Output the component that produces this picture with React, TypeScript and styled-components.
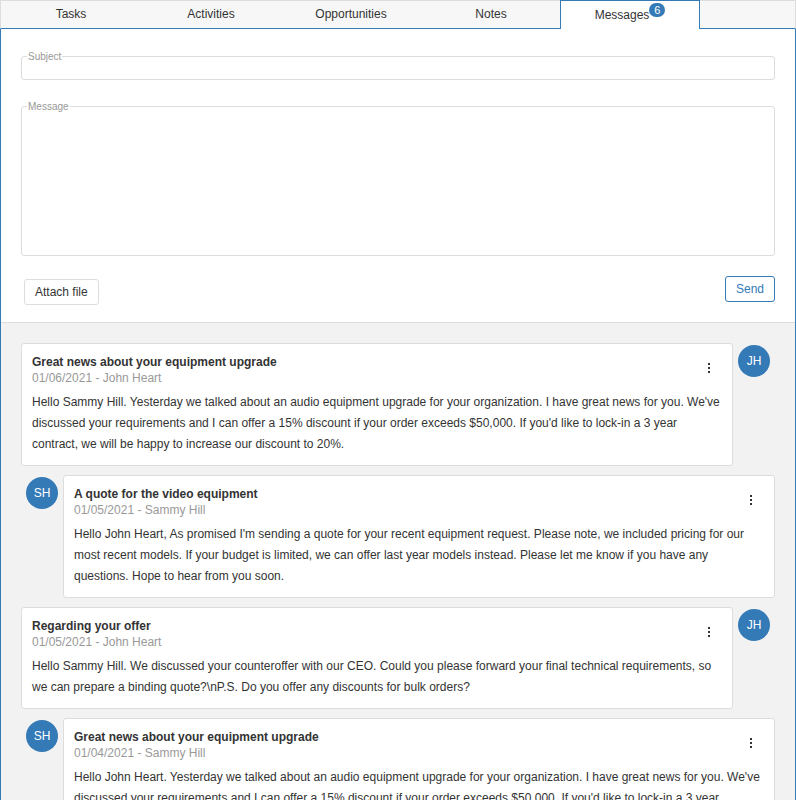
import React from "react";
import styled, { createGlobalStyle } from "styled-components";

const Global = createGlobalStyle`
  html, body { margin: 0; padding: 0; background: #fff; }
  body { font-family: "Liberation Sans", Arial, Helvetica, sans-serif; font-size: 12px; color: #333; }
  * { box-sizing: border-box; }
`;

const Page = styled.div`
  width: 796px;
`;

const TabBar = styled.div`
  display: flex;
  height: 29px;
  background: #f7f7f7;
  border: 1px solid #ddd;
  border-bottom: 1px solid #337ab7;
`;

const Tab = styled.div<{ $active?: boolean }>`
  width: 140px;
  flex: 0 0 140px;
  display: flex;
  align-items: center;
  justify-content: center;
  padding-bottom: 2px;
  font-size: 12px;
  color: #333;
  ${(p) =>
    p.$active
      ? `
    margin: -1px 0 -1px -1px;
    height: 29px;
    padding-bottom: 0;
    background: #fff;
    border: 1px solid #337ab7;
    border-bottom: none;
  `
      : ""}
`;

const Badge = styled.span`
  position: relative;
  top: -5px;
  display: inline-flex;
  align-items: center;
  justify-content: center;
  width: 16px;
  height: 14px;
  border-radius: 8px;
  background: #337ab7;
  color: #fff;
  font-size: 11px;
  line-height: 14px;
`;

const Panel = styled.div`
  border: 1px solid #337ab7;
  border-top: none;
`;

const Form = styled.div`
  display: flex;
  flex-direction: column;
  padding: 22px 20px 17px;
  border-bottom: 1px solid #ddd;
`;

const Field = styled.fieldset<{ $height: number }>`
  margin: 0 0 21px;
  padding: 0 6px;
  border: 1px solid #ddd;
  border-radius: 3px;
  min-width: 0;
  height: ${(p) => p.$height}px;
`;

const Legend = styled.legend`
  font-size: 10px;
  line-height: 11px;
  height: 11px;
  color: #999;
  padding: 0 1px;
  margin-left: -1px;
`;

const Input = styled.input`
  width: 100%;
  height: 16px;
  border: none;
  outline: none;
  background: transparent;
  font: inherit;
`;

const TextArea = styled.textarea`
  width: 100%;
  height: 138px;
  border: none;
  outline: none;
  resize: none;
  background: transparent;
  font: inherit;
`;

const Actions = styled.div`
  display: flex;
  justify-content: space-between;
  align-items: flex-start;
  margin-top: -1px;
`;

const Button = styled.button<{ $primary?: boolean }>`
  height: 26px;
  padding: 0 10px;
  border-radius: 3px;
  background: #fff;
  font-family: inherit;
  font-size: 12px;
  cursor: pointer;
  border: 1px solid ${(p) => (p.$primary ? "#337ab7" : "#ddd")};
  color: ${(p) => (p.$primary ? "#337ab7" : "#333")};
  margin-top: ${(p) => (p.$primary ? "0" : "3px")};
  margin-left: ${(p) => (p.$primary ? "0" : "3px")};
`;

const List = styled.div`
  background: #f2f2f2;
  padding: 20px 20px 20px;
  display: flex;
  flex-direction: column;
  gap: 9px;
`;

const Row = styled.div<{ $mine?: boolean }>`
  display: flex;
  flex-direction: ${(p) => (p.$mine ? "row" : "row-reverse")};
  align-items: flex-start;
`;

const Avatar = styled.div`
  flex: 0 0 32px;
  width: 32px;
  height: 32px;
  margin: 2px 5px 0;
  border-radius: 50%;
  background: #337ab7;
  color: #fff;
  display: flex;
  align-items: center;
  justify-content: center;
  font-size: 12px;
`;

const Card = styled.div`
  flex: 1;
  min-width: 0;
  background: #fff;
  border: 1px solid #ddd;
  border-radius: 3px;
  padding: 10px;
`;

const CardHead = styled.div`
  display: flex;
  align-items: flex-start;
  justify-content: space-between;
`;

const Title = styled.div`
  font-weight: bold;
  font-size: 12px;
  line-height: 16px;
  color: #333;
`;

const Meta = styled.div`
  font-size: 12px;
  line-height: 16px;
  color: #999;
`;

const MenuButton = styled.button`
  width: 24px;
  height: 24px;
  margin: 2px 1px 0 0;
  padding: 0;
  border: none;
  background: transparent;
  display: flex;
  align-items: center;
  justify-content: center;
  cursor: pointer;
`;

const Body = styled.div`
  margin-top: 6px;
  font-size: 12px;
  line-height: 21px;
  color: #333;
`;

const Dots = () => (
  <svg width="4" height="12" viewBox="0 0 4 12">
    <rect x="1" y="1" width="2" height="2" fill="#333" />
    <rect x="1" y="5" width="2" height="2" fill="#333" />
    <rect x="1" y="9" width="2" height="2" fill="#333" />
  </svg>
);

type Msg = { title: string; date: string; from: string; initials: string; mine: boolean; text: string };

const upgradeText = (to: string) =>
  `Hello ${to}. Yesterday we talked about an audio equipment upgrade for your organization. I have great news for you. We've discussed your requirements and I can offer a 15% discount if your order exceeds $50,000. If you'd like to lock-in a 3 year contract, we will be happy to increase our discount to 20%.`;

const messages: Msg[] = [
  { title: "Great news about your equipment upgrade", date: "01/06/2021", from: "John Heart", initials: "JH", mine: false, text: upgradeText("Sammy Hill") },
  {
    title: "A quote for the video equipment",
    date: "01/05/2021",
    from: "Sammy Hill",
    initials: "SH",
    mine: true,
    text: "Hello John Heart, As promised I'm sending a quote for your recent equipment request. Please note, we included pricing for our most recent models. If your budget is limited, we can offer last year models instead. Please let me know if you have any questions. Hope to hear from you soon.",
  },
  {
    title: "Regarding your offer",
    date: "01/05/2021",
    from: "John Heart",
    initials: "JH",
    mine: false,
    text: "Hello Sammy Hill. We discussed your counteroffer with our CEO. Could you please forward your final technical requirements, so we can prepare a binding quote?\\nP.S. Do you offer any discounts for bulk orders?",
  },
  { title: "Great news about your equipment upgrade", date: "01/04/2021", from: "Sammy Hill", initials: "SH", mine: true, text: upgradeText("John Heart") },
];

const tabs = ["Tasks", "Activities", "Opportunities", "Notes"];

export default function App() {
  return (
    <Page>
      <Global />
      <TabBar>
        {tabs.map((t) => (
          <Tab key={t}>{t}</Tab>
        ))}
        <Tab $active>
          Messages<Badge>6</Badge>
        </Tab>
      </TabBar>
      <Panel>
        <Form>
          <Field $height={29}>
            <Legend>Subject</Legend>
            <Input />
          </Field>
          <Field $height={155}>
            <Legend>Message</Legend>
            <TextArea />
          </Field>
          <Actions>
            <Button>Attach file</Button>
            <Button $primary>Send</Button>
          </Actions>
        </Form>
        <List>
          {messages.map((m, i) => (
            <Row key={i} $mine={m.mine}>
              <Avatar>{m.initials}</Avatar>
              <Card>
                <CardHead>
                  <div>
                    <Title>{m.title}</Title>
                    <Meta>
                      {m.date} - {m.from}
                    </Meta>
                  </div>
                  <MenuButton>
                    <Dots />
                  </MenuButton>
                </CardHead>
                <Body>{m.text}</Body>
              </Card>
            </Row>
          ))}
        </List>
      </Panel>
    </Page>
  );
}
